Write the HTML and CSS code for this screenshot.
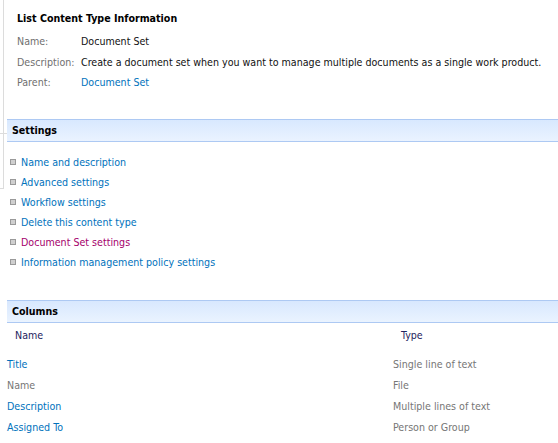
FILE: index.html
```html
<!DOCTYPE html>
<html>
<head>
<meta charset="utf-8">
<link rel="stylesheet" href="styles.css">
</head>
<body>
<div class="page">
  <div class="rail"></div>
  <div class="tick tick-a"></div>
  <div class="tick tick-b"></div>

  <section class="info">
    <h2 class="info-title">List Content Type Information</h2>
    <div class="info-grid">
      <div class="lbl">Name:</div><div class="val">Document Set</div>
      <div class="lbl">Description:</div><div class="val">Create a document set when you want to manage multiple documents as a single work product.</div>
      <div class="lbl">Parent:</div><div class="val"><a class="link" href="#">Document Set</a></div>
    </div>
  </section>

  <section class="block settings">
    <div class="block-head">Settings</div>
    <ul class="setlist">
      <li><span class="bullet"></span><a class="link" href="#">Name and description</a></li>
      <li><span class="bullet"></span><a class="link" href="#">Advanced settings</a></li>
      <li><span class="bullet"></span><a class="link" href="#">Workflow settings</a></li>
      <li><span class="bullet"></span><a class="link" href="#">Delete this content type</a></li>
      <li><span class="bullet"></span><a class="link visited" href="#">Document Set settings</a></li>
      <li><span class="bullet"></span><a class="link" href="#">Information management policy settings</a></li>
    </ul>
  </section>

  <section class="block columns">
    <div class="block-head">Columns</div>
    <div class="coltable">
      <div class="colhead">Name</div><div class="colhead">Type</div>
      <div class="cell"><a class="link" href="#">Title</a></div><div class="cell type">Single line of text</div>
      <div class="cell plain">Name</div><div class="cell type">File</div>
      <div class="cell"><a class="link" href="#">Description</a></div><div class="cell type">Multiple lines of text</div>
      <div class="cell"><a class="link" href="#">Assigned To</a></div><div class="cell type">Person or Group</div>
    </div>
  </section>
</div>
</body>
</html>
```

FILE: styles.css
```css
html, body {
  margin: 0;
  padding: 0;
  background: #ffffff;
}
body {
  font-family: "DejaVu Sans", Verdana, sans-serif;
  font-stretch: condensed;
  font-size: 10.6px;
  color: #222222;
  overflow: hidden;
}
.page {
  position: relative;
  width: 558px;
  height: 443px;
  overflow: hidden;
}
.rail {
  position: absolute;
  left: 3px;
  top: 0;
  width: 1px;
  height: 189px;
  background: #dcdcdc;
}
.tick {
  position: absolute;
  left: 0;
  height: 1px;
  background: #dcdcdc;
}
.tick-a { top: 133px; width: 7px; }
.tick-b { top: 188px; width: 4px; }

.info {
  padding: 10px 0 0 17px;
}
.info-title {
  margin: 0 0 5px 0;
  font-size: 10.6px;
  line-height: 16px;
  font-weight: bold;
  color: #000000;
}
.info-grid {
  display: grid;
  grid-template-columns: 64px auto;
  grid-auto-rows: 20.5px;
  line-height: 20.5px;
  white-space: nowrap;
}
.lbl { color: #6f6f6f; }
.val { color: #111111; }

.link {
  color: #0072bc;
  text-decoration: none;
}
.link.visited { color: #a5006b; }

.block {
  margin-left: 7px;
}
.settings { margin-top: 26px; }
.columns { margin-top: 28px; }
.block-head {
  width: 600px;
  height: 21px;
  line-height: 21px;
  padding-left: 5px;
  border-top: 1px solid #adc9f3;
  border-bottom: 1px solid #adc9f3;
  background: linear-gradient(#d8e8fe, #eaf3ff);
  font-weight: bold;
  color: #000000;
}
.setlist {
  list-style: none;
  margin: 0;
  padding: 10px 0 0 3px;
}
.setlist li {
  display: flex;
  align-items: center;
  height: 20px;
  line-height: 20px;
}
.bullet {
  width: 4px;
  height: 4px;
  border: 1px solid #9a9a9a;
  background: #cfcfcf;
  margin-right: 5px;
  flex: none;
}
.coltable {
  display: grid;
  grid-template-columns: 386px auto;
  grid-template-rows: 31px;
  grid-auto-rows: 21px;
  line-height: 21px;
  white-space: nowrap;
}
.colhead {
  padding-left: 8px;
  color: #1f2460;
  line-height: 24px;
}
.cell.plain { color: #767676; }
.cell.type { color: #767676; }
```
